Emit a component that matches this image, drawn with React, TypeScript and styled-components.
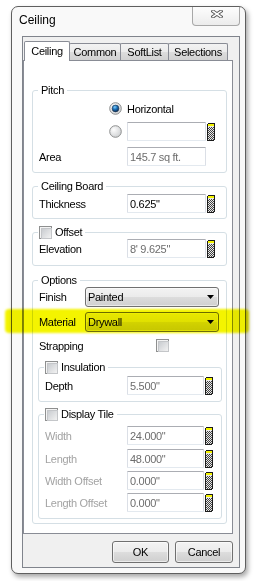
import React from 'react';
import styled, { createGlobalStyle } from 'styled-components';

const GlobalStyle = createGlobalStyle`
  html, body {
    margin: 0;
    padding: 0;
    background: #fff;
  }
  body {
    font-family: "Liberation Sans", Arial, sans-serif;
    font-size: 11px;
    letter-spacing: -0.3px;
    color: #000;
  }
  * {
    box-sizing: border-box;
  }
`;

const Page = styled.div`
  position: relative;
  width: 254px;
  height: 581px;
  padding: 6px 0 0 11px;
  overflow: hidden;
`;

const Frame = styled.div`
  width: 235px;
  height: 568px;
  border: 1px solid #5f5f5f;
  border-radius: 7px;
  background: #f9f9f9;
  box-shadow: 2px 3px 5px rgba(0, 0, 0, 0.35);
  display: flex;
  flex-direction: column;
  padding: 0 5px 5px 10px;
`;

const TitleBar = styled.div`
  height: 29px;
  flex: none;
  margin: 0 -5px 0 -10px;
  padding: 0 5px 0 7px;
  display: flex;
  justify-content: space-between;
  align-items: flex-start;
`;

const Title = styled.div`
  margin-top: 6px;
  font-size: 12px;
  letter-spacing: 0;
  line-height: 15px;
`;

const CloseButton = styled.div`
  width: 48px;
  height: 19px;
  border: 1px solid #a8a8a8;
  border-top: none;
  border-radius: 0 0 4px 4px;
  background: linear-gradient(#fdfdfd, #ececec);
  display: flex;
  justify-content: center;
  padding: 3px 0 0 1px;
`;

const Client = styled.div`
  flex: 1;
  border: 1px solid #80848c;
  background: #f0f0f0;
  display: flex;
  flex-direction: column;
  padding: 4px 6px 4px 0;
`;

const TabStrip = styled.div`
  height: 19px;
  flex: none;
  display: flex;
  align-items: flex-end;
  padding-left: 1px;
`;

const Tab = styled.div<{ $active?: boolean; $w: number }>`
  position: relative;
  z-index: ${p => (p.$active ? 2 : 1)};
  width: ${p => p.$w}px;
  height: ${p => (p.$active ? 20 : 17)}px;
  margin-bottom: ${p => (p.$active ? -1 : 0)}px;
  margin-left: -1px;
  &:first-child {
    margin-left: 0;
  }
  border: 1px solid #898c95;
  border-bottom: none;
  border-radius: 2px 2px 0 0;
  background: ${p =>
    p.$active ? '#fff' : 'linear-gradient(#f3f3f3, #ebebeb 50%, #dddddd 50%, #d2d2d2)'};
  display: flex;
  align-items: center;
  justify-content: center;
  padding-bottom: ${p => (p.$active ? 2 : 0)}px;
  white-space: nowrap;
`;

const TabPanel = styled.div`
  flex: 1;
  border: 1px solid #898c95;
  background: #fff;
  padding: 29px 5px 9px 8px;
  display: flex;
  flex-direction: column;
`;

const Group = styled.div<{ $mt: number; $pb: number; $inset?: boolean }>`
  margin-top: ${p => p.$mt}px;
  margin-left: ${p => (p.$inset ? -1 : 0)}px;
  margin-right: ${p => (p.$inset ? 4 : 0)}px;
  border: 1px solid #d5dfe5;
  border-radius: 3px;
  padding: 0 0 ${p => p.$pb}px 6px;
  display: flex;
  flex-direction: column;
`;

const Legend = styled.div<{ $check?: boolean }>`
  align-self: flex-start;
  height: 13px;
  margin: -7px 0 0 -1px;
  padding: ${p => (p.$check ? '0 3px 0 1px' : '0 3px')};
  background: #fff;
  display: flex;
  align-items: center;
  gap: 3px;
  line-height: 13px;
  white-space: nowrap;
`;

const Row = styled.div<{ $mt?: number; $h?: number }>`
  display: flex;
  align-items: center;
  height: ${p => p.$h ?? 19}px;
  margin-top: ${p => p.$mt ?? 0}px;
  white-space: nowrap;
`;

const Label = styled.div<{ $w: number; $disabled?: boolean; $end?: boolean }>`
  width: ${p => p.$w}px;
  flex: none;
  display: flex;
  align-items: center;
  justify-content: ${p => (p.$end ? 'flex-end' : 'flex-start')};
  color: ${p => (p.$disabled ? '#a3a3a3' : '#000')};
`;

const TextBox = styled.div<{ $w: number; $disabled?: boolean }>`
  width: ${p => p.$w}px;
  height: 19px;
  flex: none;
  background: #fff;
  border: 1px solid #e3e9ef;
  border-top-color: #abadb3;
  border-left-color: #dbdfe6;
  border-right-color: #dbdfe6;
  border-radius: 1px;
  padding-left: 2px;
  display: flex;
  align-items: center;
  color: ${p => (p.$disabled ? '#6d6d6d' : '#000')};
`;

const Select = styled.div`
  width: 134px;
  height: 20px;
  flex: none;
  border: 1px solid #707070;
  border-radius: 3px;
  background: linear-gradient(#f3f3f3, #ebebeb 50%, #dddddd 50%, #cfcfcf);
  box-shadow: inset 0 0 0 1px rgba(255, 255, 255, 0.55);
  display: flex;
  align-items: center;
  justify-content: space-between;
  padding: 0 4px 0 2px;
`;

const CheckBox = styled.div`
  width: 13px;
  height: 13px;
  flex: none;
  border: 1px solid #8e8f8f;
  background: #f4f4f4;
  padding: 1px;
  &::after {
    content: '';
    display: block;
    width: 100%;
    height: 100%;
    border: 1px solid #c4c6c9;
    background: linear-gradient(135deg, #c9ccd0, #f2f2f2);
  }
`;

const Calc = styled.div`
  margin-left: 1px;
  width: 8px;
  height: 18px;
  flex: none;
  display: flex;
  align-self: center;
`;

const RadioWrap = styled.div`
  width: 13px;
  height: 13px;
  margin-right: 5px;
  display: flex;
`;

const ButtonRow = styled.div`
  flex: none;
  display: flex;
  justify-content: flex-end;
  gap: 6px;
  margin-top: 7px;
`;

const Button = styled.div<{ $w: number }>`
  width: ${p => p.$w}px;
  height: 22px;
  border: 1px solid #707070;
  border-radius: 3px;
  background: linear-gradient(#f3f3f3, #ebebeb 50%, #dddddd 50%, #cfcfcf);
  box-shadow: inset 0 0 0 1px rgba(255, 255, 255, 0.6);
  display: flex;
  align-items: center;
  justify-content: center;
`;

const Highlight = styled.div`
  position: absolute;
  left: 5px;
  top: 309px;
  width: 244px;
  height: 24px;
  background: #f4f400;
  mix-blend-mode: multiply;
  filter: blur(1.2px);
  border-radius: 4px;
  pointer-events: none;
`;

const CloseGlyph = () => (
  <svg width="12" height="8" viewBox="0 0 12 8">
    <path d="M2 1.2 L10 6.8 M10 1.2 L2 6.8" stroke="#5c5c5c" strokeWidth="3.4" strokeLinecap="square" />
    <path d="M2 1.2 L10 6.8 M10 1.2 L2 6.8" stroke="#fff" strokeWidth="1.5" strokeLinecap="square" />
  </svg>
);

const calcDots: { x: number; y: number }[] = [];
for (let y = 4; y < 17; y++) {
  for (let x = 1; x < 7; x++) {
    if ((x + y) % 2 === 0) calcDots.push({ x, y });
  }
}

const CalcIcon = () => (
  <Calc>
    <svg width="8" height="18" viewBox="0 0 8 18" shapeRendering="crispEdges">
      <rect x="0.5" y="0.5" width="7" height="17" rx="1.5" fill="#e8e8e8" stroke="#1c1c1c" />
      <rect x="1" y="1" width="6" height="2" fill="#f5f500" />
      {calcDots.map(d => (
        <rect key={`${d.x}-${d.y}`} x={d.x} y={d.y} width="1" height="1" fill="#444" />
      ))}
    </svg>
  </Calc>
);

const Radio = ({ checked }: { checked?: boolean }) => (
  <RadioWrap>
    <svg width="13" height="13" viewBox="0 0 13 13">
      <defs>
        <radialGradient id="rbg" cx="0.35" cy="0.35" r="0.7">
          <stop offset="0" stopColor="#fdfdfd" />
          <stop offset="1" stopColor="#cfd1d3" />
        </radialGradient>
        <radialGradient id="rdot" cx="0.4" cy="0.3" r="0.75">
          <stop offset="0" stopColor="#7fd0ff" />
          <stop offset="0.45" stopColor="#1a6fb8" />
          <stop offset="1" stopColor="#0b2447" />
        </radialGradient>
      </defs>
      <circle cx="6.5" cy="6.5" r="5.8" fill="url(#rbg)" stroke="#8e8f8f" strokeWidth="1" />
      {checked && <circle cx="6.5" cy="6.5" r="3.4" fill="url(#rdot)" stroke="#20364f" strokeWidth="0.6" />}
    </svg>
  </RadioWrap>
);

const Arrow = () => (
  <svg width="7" height="4" viewBox="0 0 7 4">
    <path d="M0 0 H7 L3.5 4 Z" fill="#000" />
  </svg>
);

const App: React.FC = () => {
  return (
    <Page>
      <GlobalStyle />
      <Frame>
        <TitleBar>
          <Title>Ceiling</Title>
          <CloseButton>
            <CloseGlyph />
          </CloseButton>
        </TitleBar>
        <Client>
          <TabStrip>
            <Tab $active $w={46}>Ceiling</Tab>
            <Tab $w={52}>Common</Tab>
            <Tab $w={49}>SoftList</Tab>
            <Tab $w={60}>Selections</Tab>
          </TabStrip>
          <TabPanel>
            <Group $mt={0} $pb={6}>
              <Legend>Pitch</Legend>
              <Row $mt={2}>
                <Label $w={88} $end>
                  <Radio checked />
                </Label>
                Horizontal
              </Row>
              <Row $mt={4}>
                <Label $w={88} $end>
                  <Radio />
                </Label>
                <TextBox $w={79} />
                <CalcIcon />
              </Row>
              <Row $mt={6}>
                <Label $w={88}>Area</Label>
                <TextBox $w={79} $disabled>145.7 sq ft.</TextBox>
              </Row>
            </Group>

            <Group $mt={13} $pb={5}>
              <Legend>Ceiling Board</Legend>
              <Row $mt={1}>
                <Label $w={88}>Thickness</Label>
                <TextBox $w={79}>{'0.625"'}</TextBox>
                <CalcIcon />
              </Row>
            </Group>

            <Group $mt={13} $pb={7}>
              <Legend $check>
                <CheckBox />
                Offset
              </Legend>
              <Row>
                <Label $w={88}>Elevation</Label>
                <TextBox $w={79} $disabled>{`8' 9.625"`}</TextBox>
                <CalcIcon />
              </Row>
            </Group>

            <Group $mt={14} $pb={4}>
              <Legend>Options</Legend>
              <Row $h={20}>
                <Label $w={46}>Finish</Label>
                <Select>
                  Painted
                  <Arrow />
                </Select>
              </Row>
              <Row $h={20} $mt={5}>
                <Label $w={46}>Material</Label>
                <Select>
                  Drywall
                  <Arrow />
                </Select>
              </Row>
              <Row $h={13} $mt={7}>
                <Label $w={117}>Strapping</Label>
                <CheckBox />
              </Row>

              <Group $mt={15} $pb={6} $inset>
                <Legend $check>
                  <CheckBox />
                  Insulation
                </Legend>
                <Row $mt={2}>
                  <Label $w={82}>Depth</Label>
                  <TextBox $w={77} $disabled>{'5.500"'}</TextBox>
                  <CalcIcon />
                </Row>
              </Group>

              <Group $mt={12} $pb={6} $inset>
                <Legend $check>
                  <CheckBox />
                  Display Tile
                </Legend>
                <Row $mt={5}>
                  <Label $w={82} $disabled>Width</Label>
                  <TextBox $w={77} $disabled>{'24.000"'}</TextBox>
                  <CalcIcon />
                </Row>
                <Row $mt={4}>
                  <Label $w={82} $disabled>Length</Label>
                  <TextBox $w={77} $disabled>{'48.000"'}</TextBox>
                  <CalcIcon />
                </Row>
                <Row $mt={3}>
                  <Label $w={82} $disabled>Width Offset</Label>
                  <TextBox $w={77} $disabled>{'0.000"'}</TextBox>
                  <CalcIcon />
                </Row>
                <Row $mt={3}>
                  <Label $w={82} $disabled>Length Offset</Label>
                  <TextBox $w={77} $disabled>{'0.000"'}</TextBox>
                  <CalcIcon />
                </Row>
              </Group>
            </Group>
          </TabPanel>
          <ButtonRow>
            <Button $w={57}>OK</Button>
            <Button $w={58}>Cancel</Button>
          </ButtonRow>
        </Client>
      </Frame>
      <Highlight />
    </Page>
  );
};

export default App;
